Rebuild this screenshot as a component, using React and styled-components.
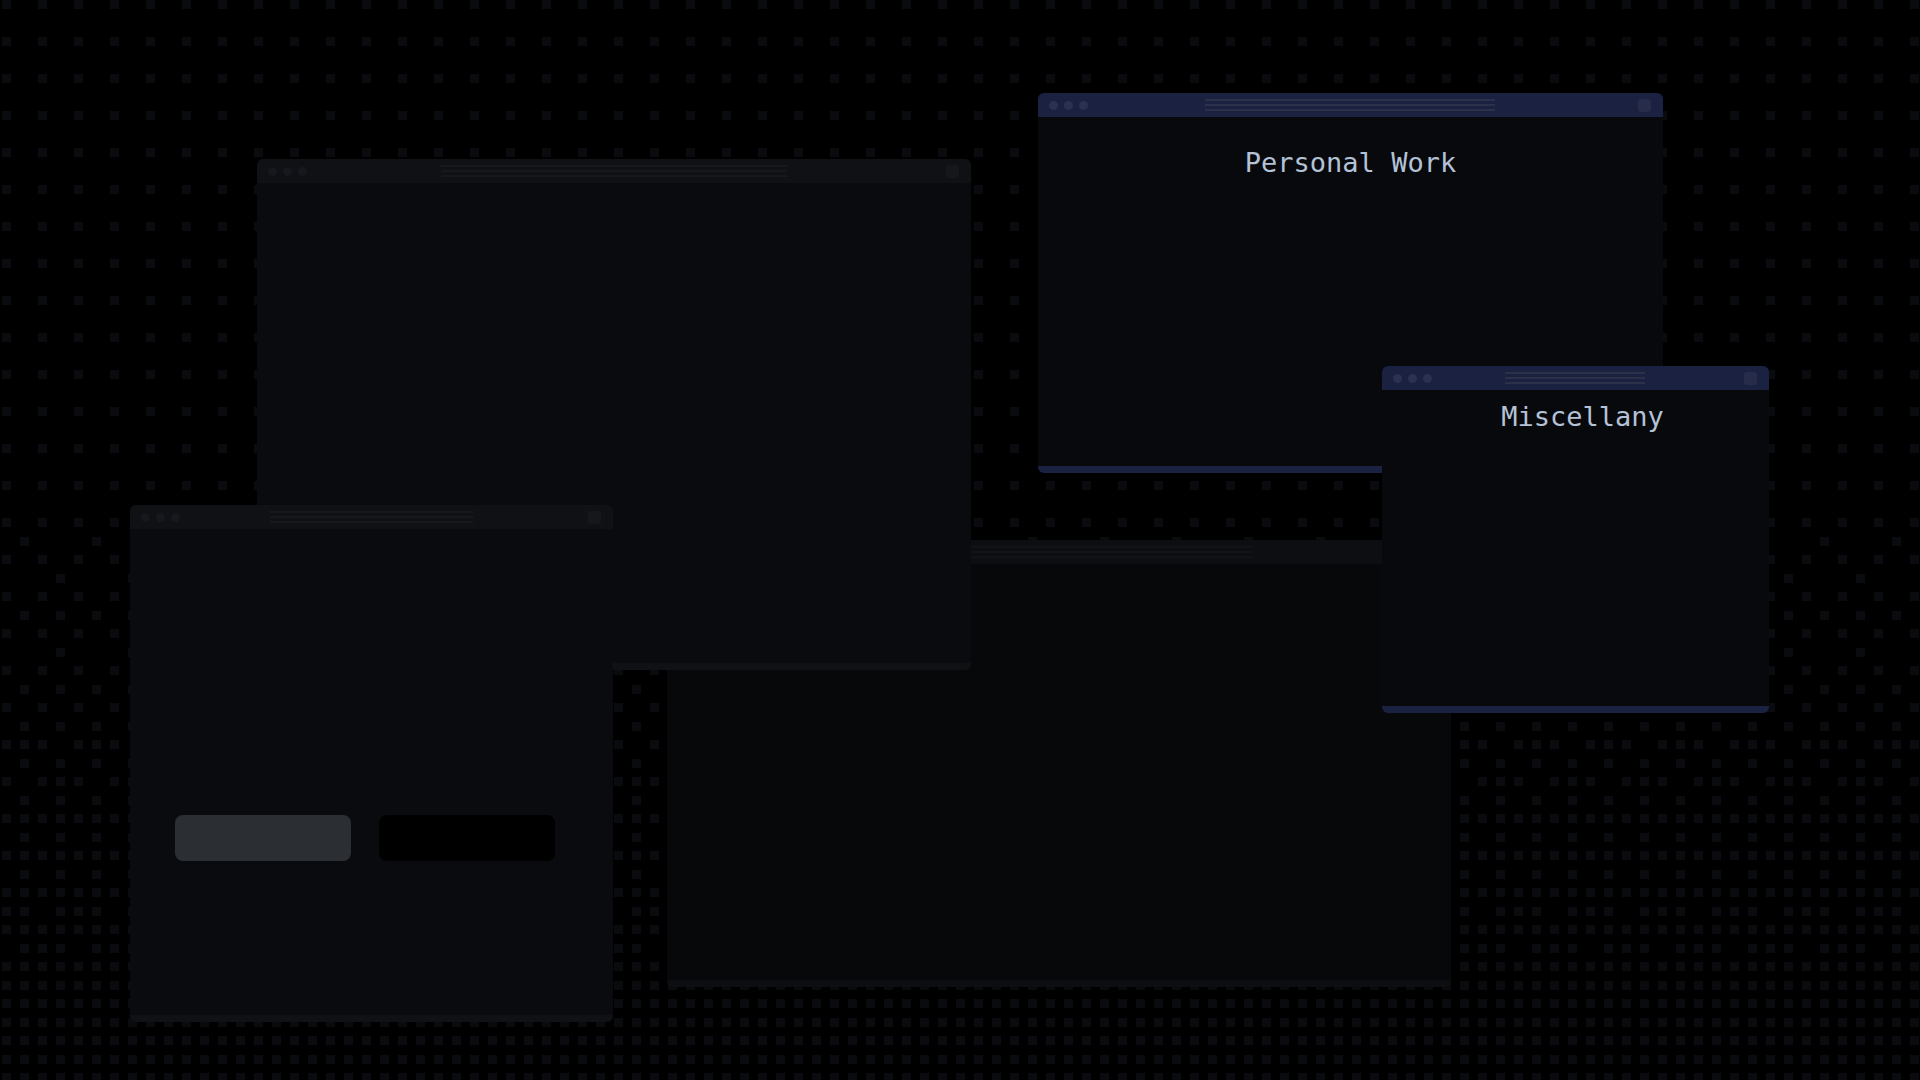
import React from "react";
import styled, { createGlobalStyle } from "styled-components";

const GlobalStyle = createGlobalStyle`
  html, body {
    margin: 0;
    padding: 0;
    background: #000;
    overflow: hidden;
  }
  #root {
    width: 1920px;
    height: 1080px;
  }
`;

// ordered dither of a dark gradient, drawn as the desktop backdrop
const BAYER = [
  [0, 8, 2, 10],
  [12, 4, 14, 6],
  [3, 11, 1, 9],
  [15, 7, 13, 5],
];
const CELL_W = 18;
const CELL_H = 18.5;

const density = (x, y) => {
  const t = Math.min(1, Math.max(0, (y - 400) / 600));
  return 0.25 + 0.75 * Math.pow(t, 1.5);
};

const buildDots = () => {
  let d = "";
  for (let r = 0; r < 59; r++) {
    for (let c = 0; c < 107; c++) {
      const x = 2 + c * CELL_W;
      const y = Math.round(r * CELL_H);
      if ((BAYER[r % 4][c % 4] + 0.5) / 16 < density(x + 4, y + 4)) {
        d += `M${x} ${y}h9v9h-9z`;
      }
    }
  }
  return d;
};

const DOTS = buildDots();

const TONES = {
  active: {
    bar: "#1b2140",
    body: "#08090c",
    dot: "#2b3150",
    line: "#2c3049",
    square: "#262c4a",
  },
  dim: {
    bar: "#0f1115",
    body: "#0a0b0e",
    dot: "#16181d",
    line: "#16181c",
    square: "#15171b",
  },
  dark: {
    bar: "#0c0e12",
    body: "#07080a",
    dot: "#111317",
    line: "#111318",
    square: "#101216",
  },
};

// back to front
const windows = [
  { id: "b", x: 667, y: 540, w: 784, h: 447, tone: "dark", lines: 388 },
  { id: "a", x: 257, y: 159, w: 714, h: 511, tone: "dim", lines: 346 },
  { id: "c", x: 130, y: 505, w: 483, h: 517, tone: "dim", lines: 203, buttons: true },
  {
    id: "d",
    x: 1038,
    y: 93,
    w: 625,
    h: 380,
    tone: "active",
    lines: 290,
    title: "Personal Work",
    padTop: 30,
    padLeft: 0,
  },
  {
    id: "e",
    x: 1382,
    y: 366,
    w: 387,
    h: 347,
    tone: "active",
    lines: 140,
    title: "Miscellany",
    padTop: 11,
    padLeft: 14,
  },
];

const Window = ({ win }) => {
  const tone = TONES[win.tone];
  return (
    <WindowFrame $x={win.x} $y={win.y} $w={win.w} $h={win.h} $tone={tone}>
      <TitleBar $tone={tone}>
        <Lights>
          <Light $tone={tone} />
          <Light $tone={tone} />
          <Light $tone={tone} />
        </Lights>
        <Grip $width={win.lines}>
          <GripLine $tone={tone} />
          <GripLine $tone={tone} />
          <GripLine $tone={tone} />
        </Grip>
        <CornerButton $tone={tone} />
      </TitleBar>
      <WindowBody $padTop={win.padTop} $padLeft={win.padLeft}>
        {win.title && <WindowTitle>{win.title}</WindowTitle>}
        {win.buttons && (
          <ButtonRow>
            <Placeholder $kind="grey" />
            <Placeholder $kind="black" />
          </ButtonRow>
        )}
      </WindowBody>
    </WindowFrame>
  );
};

const App = () => (
  <Desktop>
    <GlobalStyle />
    <Backdrop width="1920" height="1080" viewBox="0 0 1920 1080">
      <path d={DOTS} fill="#0a0b0e" />
    </Backdrop>
    {windows.map((win) => (
      <Window key={win.id} win={win} />
    ))}
  </Desktop>
);

export default App;

const Desktop = styled.div`
  position: relative;
  width: 1920px;
  height: 1080px;
  background: #000;
  overflow: hidden;
`;

const Backdrop = styled.svg`
  position: absolute;
  inset: 0;
  display: block;
`;

const WindowFrame = styled.div`
  position: absolute;
  left: ${(p) => p.$x}px;
  top: ${(p) => p.$y}px;
  width: ${(p) => p.$w}px;
  height: ${(p) => p.$h}px;
  display: flex;
  flex-direction: column;
  border-radius: 6px;
  overflow: hidden;
  background: ${(p) => p.$tone.body};
  border-bottom: 7px solid ${(p) => p.$tone.bar};
  box-sizing: border-box;
`;

const TitleBar = styled.div`
  flex: 0 0 24px;
  display: grid;
  grid-template-columns: 1fr auto 1fr;
  align-items: center;
  padding: 0 12px 0 11px;
  background: ${(p) => p.$tone.bar};
`;

const Lights = styled.div`
  display: flex;
  gap: 6px;
  justify-self: start;
`;

const Light = styled.span`
  width: 9px;
  height: 9px;
  border-radius: 50%;
  background: ${(p) => p.$tone.dot};
`;

const Grip = styled.div`
  width: ${(p) => p.$width}px;
  display: flex;
  flex-direction: column;
  gap: 3px;
`;

const GripLine = styled.span`
  height: 2px;
  background: ${(p) => p.$tone.line};
`;

const CornerButton = styled.span`
  justify-self: end;
  width: 13px;
  height: 13px;
  border-radius: 3px;
  background: ${(p) => p.$tone.square};
`;

const WindowBody = styled.div`
  flex: 1;
  display: flex;
  flex-direction: column;
  padding-top: ${(p) => (p.$padTop != null ? p.$padTop : 286)}px;
  padding-left: ${(p) => (p.$padLeft != null ? p.$padLeft : 45)}px;
`;

const WindowTitle = styled.div`
  text-align: center;
  font-family: "DejaVu Sans Mono", "Liberation Mono", monospace;
  font-size: 27px;
  line-height: 32px;
  color: #b4c2d7;
`;

const ButtonRow = styled.div`
  display: flex;
  gap: 28px;
`;

const Placeholder = styled.div`
  width: 176px;
  height: 46px;
  border-radius: 8px;
  background: ${(p) => (p.$kind === "grey" ? "#2b2e33" : "#000")};
`;
